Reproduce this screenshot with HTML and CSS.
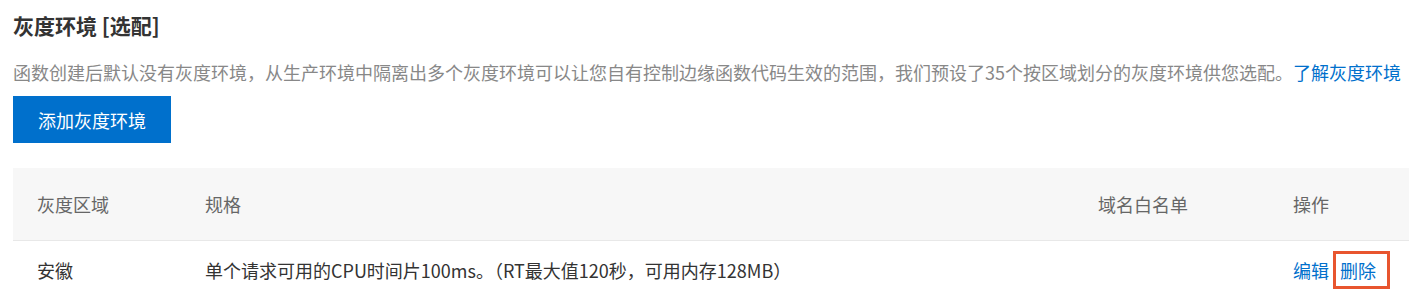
FILE: index.html
```html
<!DOCTYPE html>
<html lang="zh-CN">

<head>
    <meta charset="UTF-8">
    <meta name="viewport" content="width=device-width, initial-scale=1.0">
    <title>灰度环境</title>
    <link rel="stylesheet" href="styles.css">
</head>

<body>
    <div class="container">
        <h2 class="title">灰度环境 [选配]</h2>
        <p class="desc">函数创建后默认没有灰度环境，从生产环境中隔离出多个灰度环境可以让您自有控制边缘函数代码生效的范围，我们预设了35个按区域划分的灰度环境供您选配。<a href="#">了解灰度环境</a></p>
        <button class="add-button">添加灰度环境</button>

        <table class="env-table">
            <thead>
                <tr>
                    <th class="col-region">灰度区域</th>
                    <th class="col-spec">规格</th>
                    <th class="col-white">域名白名单</th>
                    <th class="col-op">操作</th>
                </tr>
            </thead>
            <tbody>
                <tr>
                    <td>安徽</td>
                    <td>单个请求可用的CPU时间片100ms。（RT最大值120秒，可用内存128MB）</td>
                    <td></td>
                    <td class="ops">
                        <a href="#">编辑</a><a href="#" class="delete-link">删除</a>
                    </td>
                </tr>
            </tbody>
        </table>
    </div>
</body>

</html>
```

FILE: styles.css
```css
body {
    font-family: "Noto Sans CJK SC", "Noto Sans", sans-serif;
    background-color: #ffffff;
    margin: 0;
    padding: 0;
    color: #333;
}

.container {
    padding: 10px 0 0 13px;
}

.title {
    margin: 0;
    font-size: 21px;
    font-weight: bold;
    line-height: 30px;
    color: #333;
}

.desc {
    margin: 18px 0 0;
    font-size: 18px;
    line-height: 28px;
    color: #888;
    white-space: nowrap;
}

.desc a {
    color: #0070cc;
    text-decoration: none;
}

.add-button {
    display: block;
    margin-top: 10px;
    width: 158px;
    height: 47px;
    background: #0070cc;
    color: white;
    border: none;
    font-family: inherit;
    font-size: 18px;
    padding: 0;
    cursor: pointer;
}

.env-table {
    margin-top: 25px;
    width: 1396px;
    border-collapse: collapse;
    font-size: 18px;
}

.env-table th {
    height: 72px;
    background: #f7f7f7;
    color: #666;
    font-weight: normal;
    text-align: left;
    padding: 0 0 0 24px;
    border-bottom: 1px solid #e8e8e8;
}

.env-table td {
    height: 58px;
    padding: 0 0 0 24px;
    color: #333;
}

.col-region {
    width: 144px;
}

.col-white {
    width: 171px;
}

.col-op {
    width: 116px;
}

.ops a {
    color: #0070cc;
    text-decoration: none;
}

.delete-link {
    display: inline-block;
    margin-left: 4px;
    padding: 3px 11px 3px 4px;
    border: 3px solid #e8552f;
}
```
